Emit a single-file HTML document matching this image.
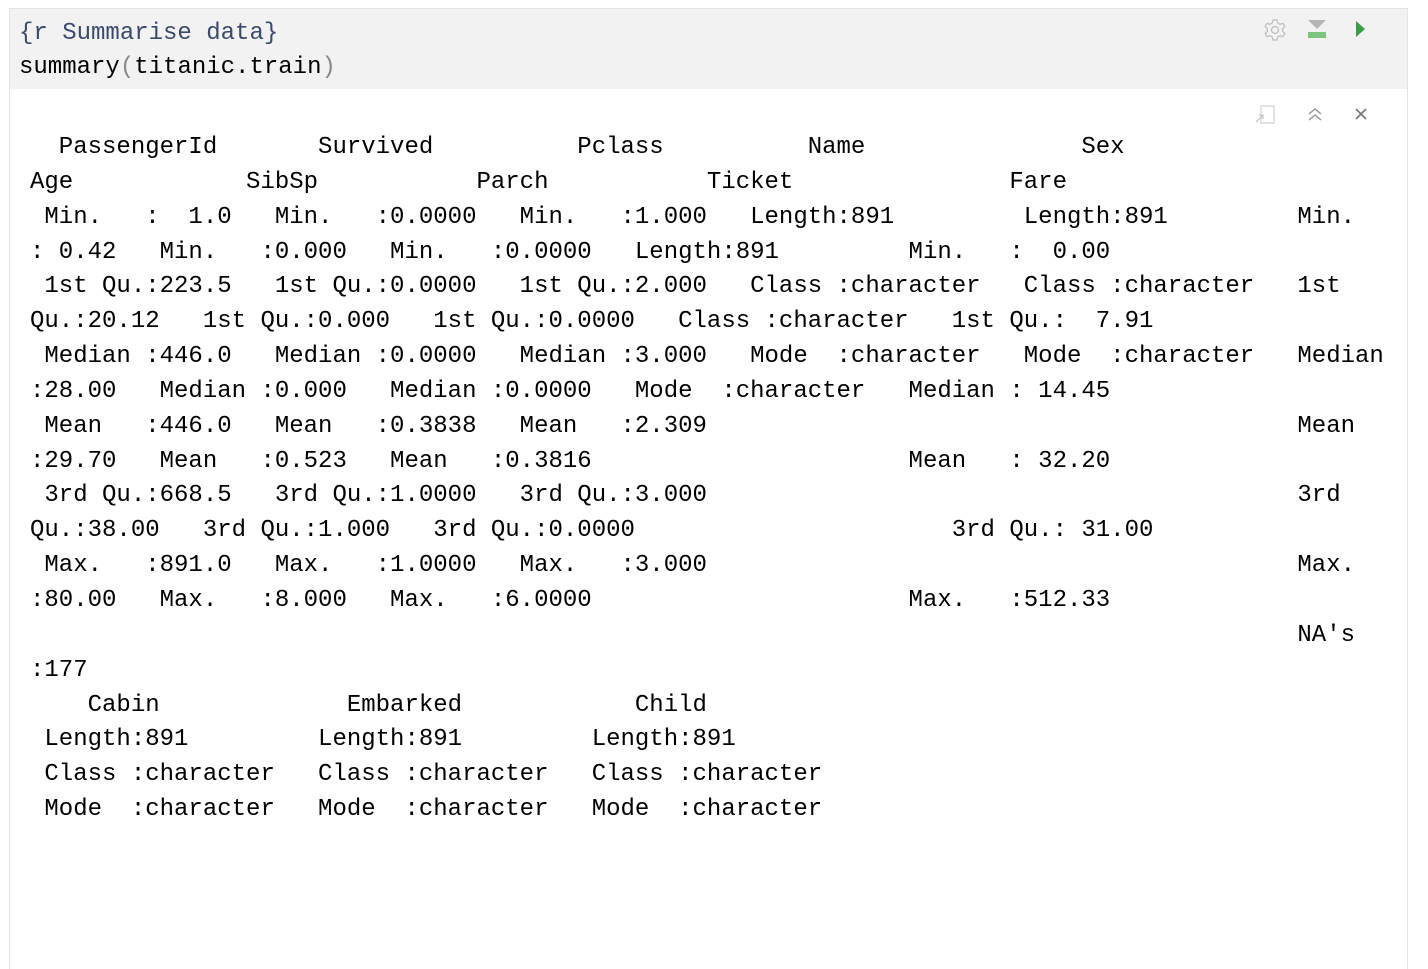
<!DOCTYPE html>
<html><head><meta charset="utf-8"><style>
html,body{margin:0;padding:0;background:#fff;width:1428px;height:958px;overflow:hidden}
.box{position:absolute;left:9px;top:8px;width:1397px;height:960px;border:1px solid #e4e4e4;border-bottom:none;background:#fff}
.hdr{position:absolute;left:0;top:0;width:1397px;height:80px;background:#f2f2f2}
.code{position:absolute;left:9px;font:24px "Liberation Mono",monospace;white-space:pre;line-height:34px}
pre{position:absolute;left:20px;top:122px;margin:0;font:24px/34.85px "Liberation Mono",monospace;color:#000}
</style></head><body>
<div class="box">
<div class="hdr">
<div class="code" style="top:8px;color:#3a4a6e">{r Summarise data}</div>
<div class="code" style="top:42px;color:#000">summary<span style="color:#8a8a8a">(</span>titanic.train<span style="color:#8a8a8a">)</span></div>
<svg style="position:absolute;left:1252px;top:8px" width="26" height="26" viewBox="0 0 26 26"><g fill="none" stroke="#bdbdbd" stroke-width="1.2"><circle cx="13" cy="13" r="3.5"/><path d="M11 3h4l.7 3 2.3 1.3 2.9-1 2 3.4-2.3 2v2.6l2.3 2-2 3.4-2.9-1-2.3 1.3-.7 3h-4l-.7-3-2.3-1.3-2.9 1-2-3.4 2.3-2v-2.6l-2.3-2 2-3.4 2.9 1 2.3-1.3z"/></g></svg>
<svg style="position:absolute;left:1297px;top:10px" width="22" height="22" viewBox="0 0 22 22"><path d="M1 9h18l-9 9z" fill="#b5b5b5" transform="translate(0,-8)"/><rect x="1" y="13" width="18" height="6" fill="#7cc47f"/></svg>
<svg style="position:absolute;left:1344px;top:10px" width="14" height="20" viewBox="0 0 14 20"><path d="M2 2l9 8-9 8z" fill="#3d9c45"/></svg>
</div>
<svg style="position:absolute;left:1243px;top:95px" width="24" height="22" viewBox="0 0 24 22"><rect x="8" y="2" width="13" height="17" fill="none" stroke="#d0d0d0" stroke-width="1.2"/><path d="M3 18l7-7M6 11h4v4" fill="none" stroke="#c8c8c8" stroke-width="1.3"/></svg>
<svg style="position:absolute;left:1296px;top:96px" width="18" height="18" viewBox="0 0 18 18"><path d="M3 9l6-5 6 5M3 15l6-5 6 5" fill="none" stroke="#a0a0a0" stroke-width="1.5"/></svg>
<svg style="position:absolute;left:1344px;top:98px" width="14" height="14" viewBox="0 0 14 14"><path d="M2 2l10 10M12 2L2 12" stroke="#7a7a7a" stroke-width="1.8"/></svg>
<pre>  PassengerId       Survived          Pclass          Name               Sex           
Age            SibSp           Parch           Ticket               Fare         
 Min.   :  1.0   Min.   :0.0000   Min.   :1.000   Length:891         Length:891         Min.   
: 0.42   Min.   :0.000   Min.   :0.0000   Length:891         Min.   :  0.00  
 1st Qu.:223.5   1st Qu.:0.0000   1st Qu.:2.000   Class :character   Class :character   1st 
Qu.:20.12   1st Qu.:0.000   1st Qu.:0.0000   Class :character   1st Qu.:  7.91  
 Median :446.0   Median :0.0000   Median :3.000   Mode  :character   Mode  :character   Median
:28.00   Median :0.000   Median :0.0000   Mode  :character   Median : 14.45  
 Mean   :446.0   Mean   :0.3838   Mean   :2.309                                         Mean   
:29.70   Mean   :0.523   Mean   :0.3816                      Mean   : 32.20  
 3rd Qu.:668.5   3rd Qu.:1.0000   3rd Qu.:3.000                                         3rd 
Qu.:38.00   3rd Qu.:1.000   3rd Qu.:0.0000                      3rd Qu.: 31.00  
 Max.   :891.0   Max.   :1.0000   Max.   :3.000                                         Max.   
:80.00   Max.   :8.000   Max.   :6.0000                      Max.   :512.33  
                                                                                        NA's   
:177   
    Cabin             Embarked            Child          
 Length:891         Length:891         Length:891        
 Class :character   Class :character   Class :character  
 Mode  :character   Mode  :character   Mode  :character  </pre>
</div>
</body></html>
